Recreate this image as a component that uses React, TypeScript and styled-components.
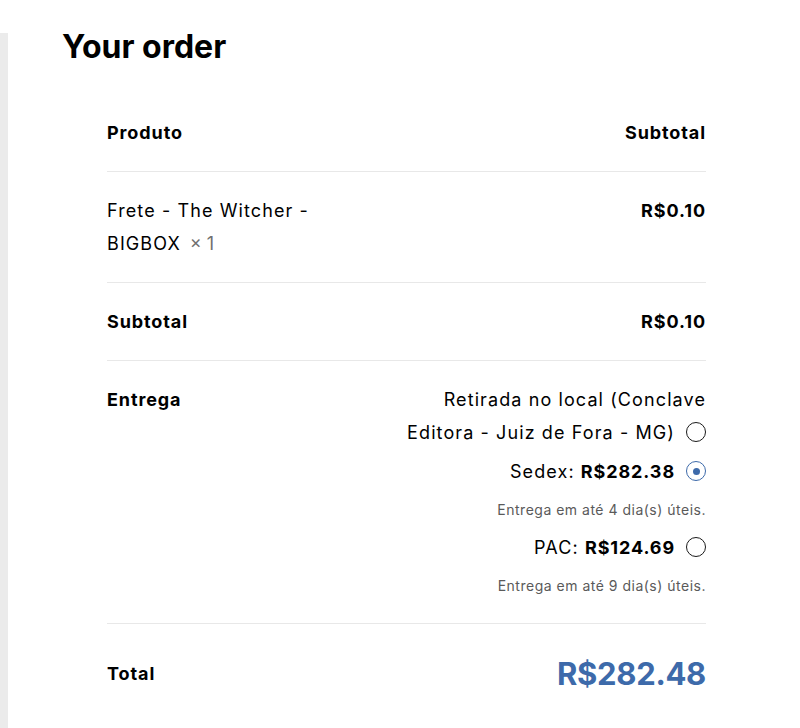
import React from "react";
import styled, { createGlobalStyle } from "styled-components";

const Global = createGlobalStyle`
  html, body { margin: 0; padding: 0; background: #fff; }
  body { font-family: Inter, "Noto Sans", sans-serif; color: #000; }
  * { box-sizing: border-box; }
`;

const Page = styled.div`
  display: flex;
  min-height: 728px;
`;

const Rail = styled.div`
  width: 8px;
  margin-top: 33px;
  background: #ebebeb;
  flex-shrink: 0;
`;

const Content = styled.div`
  flex: 1;
  padding: 28px 0 0 54px;
`;

const Title = styled.h3`
  margin: 0 0 28px;
  font-size: 32px;
  line-height: 38px;
  font-weight: 700;
  letter-spacing: 0;
`;

const Table = styled.div`
  margin-left: 45px;
  width: 599px;
`;

const Row = styled.div<{ $pad?: number; $last?: boolean }>`
  display: flex;
  justify-content: space-between;
  align-items: flex-start;
  padding: ${(p) => p.$pad ?? 22}px 0;
  border-bottom: ${(p) => (p.$last ? "none" : "1px solid #e8e8e8")};
  font-size: 18px;
  line-height: 33px;
  letter-spacing: 1.1px;
`;

const Head = styled.div`
  font-weight: 700;
  font-size: 18px;
  letter-spacing: 0.9px;
`;

const Cell = styled.div<{ $bold?: boolean; $w?: number }>`
  font-weight: ${(p) => (p.$bold ? 700 : 400)};
  letter-spacing: ${(p) => (p.$bold ? "0.9px" : "1.1px")};
  max-width: ${(p) => (p.$w ? `${p.$w}px` : "none")};
  text-align: left;
`;

const Qty = styled.span`
  color: #707070;
  margin-left: 9px;
  letter-spacing: 0;
  white-space: nowrap;
`;

const Shipping = styled.ul`
  list-style: none;
  margin: 0;
  padding: 0;
  text-align: right;
  width: 312px;
`;

const Option = styled.li<{ $note?: boolean }>`
  margin-bottom: ${(p) => (p.$note ? 11 : 6)}px;
  &:last-child {
    margin-bottom: 5px;
  }
`;

const OptLabel = styled.label`
  display: inline;
`;

const Radio = styled.span<{ $checked?: boolean }>`
  display: inline-block;
  vertical-align: middle;
  position: relative;
  top: -2px;
  width: 20px;
  height: 20px;
  margin-left: 11px;
  border-radius: 50%;
  border: 1.6px solid ${(p) => (p.$checked ? "#3d6aaa" : "#1a1a1a")};
  &::after {
    content: "";
    display: ${(p) => (p.$checked ? "block" : "none")};
    position: absolute;
    left: 50%;
    top: 50%;
    width: 7px;
    height: 7px;
    margin: -3.5px 0 0 -3.5px;
    border-radius: 50%;
    background: #3d6aaa;
  }
`;

const Note = styled.p`
  margin: 12px 0 0;
  font-size: 14px;
  line-height: 20px;
  letter-spacing: 0.5px;
  color: #5a5a5a;
`;

const Price = styled.span`
  font-weight: 700;
  letter-spacing: 0.9px;
`;

const Total = styled.div`
  font-size: 31px;
  line-height: 40px;
  font-weight: 700;
  color: #3d6aaa;
  letter-spacing: -0.3px;
`;

const TotalLabel = styled.div`
  font-weight: 700;
  font-size: 18px;
  letter-spacing: 0.9px;
  line-height: 40px;
`;

export default function App() {
  return (
    <>
      <Global />
      <Page>
        <Rail />
        <Content>
          <Title>Your order</Title>
          <Table>
            <Row>
              <Head>Produto</Head>
              <Head>Subtotal</Head>
            </Row>
            <Row>
              <Cell $w={250}>
                Frete - The Witcher - BIGBOX<Qty>× 1</Qty>
              </Cell>
              <Cell $bold>R$0.10</Cell>
            </Row>
            <Row>
              <Cell $bold>Subtotal</Cell>
              <Cell $bold>R$0.10</Cell>
            </Row>
            <Row>
              <Cell $bold>Entrega</Cell>
              <Shipping>
                <Option>
                  <OptLabel>Retirada no local (Conclave Editora - Juiz de Fora - MG)</OptLabel>
                  <Radio />
                </Option>
                <Option $note>
                  <OptLabel>
                    Sedex: <Price>R$282.38</Price>
                  </OptLabel>
                  <Radio $checked />
                  <Note>Entrega em até 4 dia(s) úteis.</Note>
                </Option>
                <Option $note>
                  <OptLabel>
                    PAC: <Price>R$124.69</Price>
                  </OptLabel>
                  <Radio />
                  <Note>Entrega em até 9 dia(s) úteis.</Note>
                </Option>
              </Shipping>
            </Row>
            <Row $pad={30} $last>
              <TotalLabel>Total</TotalLabel>
              <Total>R$282.48</Total>
            </Row>
          </Table>
        </Content>
      </Page>
    </>
  );
}
